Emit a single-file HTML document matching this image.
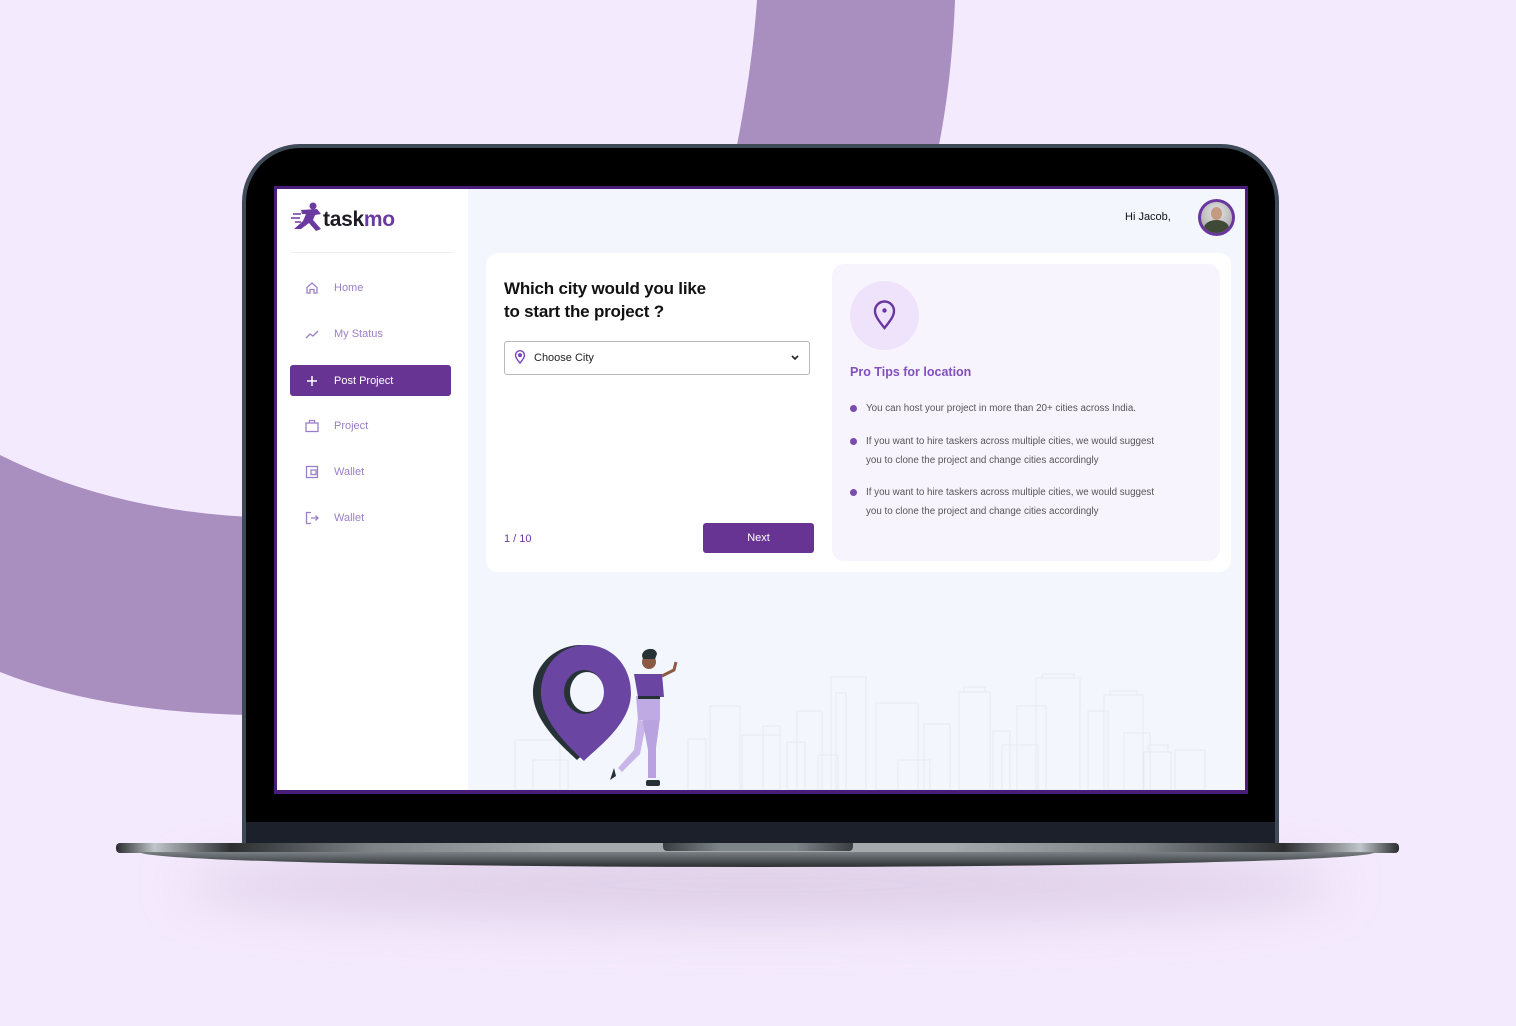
<!DOCTYPE html>
<html><head><meta charset="utf-8"><style>
*{margin:0;padding:0;box-sizing:border-box}
body{width:1516px;height:1026px;overflow:hidden;background:#f4eafd;font-family:"Liberation Sans",sans-serif;position:relative}
.abs{position:absolute}
.nav{position:absolute;left:290px;width:161px;height:31px;display:flex;align-items:center;font-size:11px;color:#9b7fc6;border-radius:3px}
.nav svg{position:absolute;left:15px}
.nav span{position:absolute;left:44px}
.tip{position:absolute;left:850px;font-size:9.8px;color:#555;line-height:19px;letter-spacing:0px}
.tip:before{content:"";position:absolute;left:0;top:6px;width:7px;height:7px;border-radius:50%;background:#7a4ab0}
.tip div{padding-left:16px}
</style></head><body>
<svg class="abs" style="left:0;top:0" width="1516" height="1026">
<defs><filter id="b" x="-20%" y="-200%" width="140%" height="500%"><feGaussianBlur stdDeviation="25"/></filter></defs>
<path d="M757 0 L955 0 Q952 80 938 150 L736 150 Q752 70 757 0Z" fill="#a98ec0"/>
<path d="M0 455 Q110 510 250 517 L250 715 Q100 712 0 672Z" fill="#a98ec0"/>
<ellipse cx="760" cy="885" rx="580" ry="35" fill="#d9c8e2" opacity="0.8" filter="url(#b)"/>
</svg>
<div class="abs" style="left:242px;top:144px;width:1037px;height:710px;background:#3f4a59;border-radius:58px 58px 0 0"></div>
<div class="abs" style="left:246px;top:148px;width:1029px;height:700px;background:#000;border-radius:54px 54px 0 0"></div>
<div class="abs" style="left:246px;top:822px;width:1029px;height:24px;background:#1b202b"></div>
<div class="abs" style="left:116px;top:843px;width:1283px;height:10px;border-radius:4px;background:linear-gradient(90deg,#2a2c2f 0%,#c0c6c9 3%,#2c2e30 9%,#7d8385 20%,#a4aaac 35%,#a4aaac 65%,#7d8385 80%,#2c2e30 91%,#c0c6c9 97%,#2a2c2f 100%)"></div>
<div class="abs" style="left:140px;top:852px;width:1235px;height:15px;background:linear-gradient(#7a8084,#2c3033);border-radius:0 0 50% 50%/0 0 100% 100%"></div>
<div class="abs" style="left:663px;top:843px;width:190px;height:8px;border-radius:0 0 4px 4px;background:linear-gradient(90deg,#3a3d40,#7d8588 30%,#7d8588 70%,#3a3d40)"></div>
<div class="abs" style="left:274px;top:186px;width:974px;height:608px;background:#4b1d7a"></div>
<div class="abs" style="left:277px;top:189px;width:968px;height:601px;background:#f3f6fd;overflow:hidden">
  <div class="abs" style="left:0;top:0;width:191px;height:601px;background:#fff"></div>
  <div class="abs" style="left:14px;top:63px;width:163px;height:1px;background:#f0eef3"></div>
</div>
<svg class="abs" style="left:291px;top:202px" width="36" height="30" viewBox="0 0 36 30">
<circle cx="22" cy="4" r="3.5" fill="#6a3aa0"/>
<path d="M10 8 L26 7 L30 12 L24 13 L22 18 L30 27 L25 29 L18 21 L10 27 L3 27 L12 19 L15 12 L11 12Z" fill="#6a3aa0"/>
<path d="M2 12h8M0 16h9M4 20h6" stroke="#6a3aa0" stroke-width="1.5"/>
</svg>
<div class="abs" style="left:323px;top:208px;font-size:21px;font-weight:bold;letter-spacing:-0.3px;color:#1e1a24">task<span style="color:#6a3aa0">mo</span></div>
<div class="nav" style="top:272px"><svg width="14" height="14" viewBox="0 0 14 14" fill="none" stroke="#9b7fc6" stroke-width="1.3"><path d="M2 6.5L7 2l5 4.5V12H9V8.5H5V12H2z"/></svg><span>Home</span></div>
<div class="nav" style="top:318px"><svg width="14" height="14" viewBox="0 0 14 14" fill="none" stroke="#9b7fc6" stroke-width="1.3"><path d="M1 11l4-4 3 2 5-5"/></svg><span>My Status</span></div>
<div class="nav" style="top:365px;background:#673493;color:#fff"><svg width="14" height="14" viewBox="0 0 14 14" stroke="#fff" stroke-width="1.5"><path d="M7 2v10M2 7h10"/></svg><span>Post Project</span></div>
<div class="nav" style="top:410px"><svg width="14" height="14" viewBox="0 0 14 14" fill="none" stroke="#9b7fc6" stroke-width="1.3"><rect x="1" y="4" width="12" height="8.5"/><path d="M4.5 4V1.5h5V4"/></svg><span>Project</span></div>
<div class="nav" style="top:456px"><svg width="14" height="14" viewBox="0 0 14 14" fill="none" stroke="#9b7fc6" stroke-width="1.3"><rect x="1.5" y="1.5" width="11" height="11"/><rect x="6" y="5" width="5" height="4.5"/></svg><span>Wallet</span></div>
<div class="nav" style="top:502px"><svg width="14" height="14" viewBox="0 0 14 14" fill="none" stroke="#9b7fc6" stroke-width="1.3"><path d="M6 1.5H1.5v11H6M6 7h7M10.5 4.5L13 7l-2.5 2.5"/></svg><span>Wallet</span></div>
<div class="abs" style="left:1125px;top:211px;font-size:11px;color:#111">Hi Jacob,</div>
<div class="abs" style="left:1198px;top:199px;width:37px;height:37px;border-radius:50%;background:#6a36a0;padding:3px">
 <div style="width:31px;height:31px;border-radius:50%;overflow:hidden;background:radial-gradient(circle at 50% 35%,#e8e8e8,#9a9a9a);position:relative">
  <div class="abs" style="left:10px;top:5px;width:11px;height:13px;border-radius:50%;background:#c49a82"></div>
  <div class="abs" style="left:3px;top:18px;width:25px;height:16px;border-radius:50% 50% 0 0;background:#3f4a36"></div>
 </div>
</div>
<div class="abs" style="left:486px;top:253px;width:745px;height:319px;background:#fff;border-radius:12px"></div>
<div class="abs" style="left:504px;top:277px;font-size:17px;font-weight:bold;color:#111;line-height:23px;letter-spacing:-0.2px">Which city would you like<br>to start the project ?</div>
<div class="abs" style="left:504px;top:341px;width:306px;height:34px;border:1px solid #b8b8bd;border-radius:3px"></div>
<svg class="abs" style="left:514px;top:350px" width="12" height="14" viewBox="0 0 12 14" fill="none" stroke="#7a46b8" stroke-width="1.4"><path d="M6 13C3 9.5 1.5 7.3 1.5 5.2a4.5 4.5 0 019 0C10.5 7.3 9 9.5 6 13z"/><circle cx="6" cy="5.2" r="1.4" fill="#7a46b8"/></svg>
<div class="abs" style="left:534px;top:352px;font-size:11px;color:#222">Choose City</div>
<svg class="abs" style="left:790px;top:354px" width="10" height="8" viewBox="0 0 10 8" fill="none" stroke="#222" stroke-width="1.6"><path d="M2 2l3 3 3-3"/></svg>
<div class="abs" style="left:504px;top:533px;font-size:11px;color:#6a36a0">1 / 10</div>
<div class="abs" style="left:703px;top:523px;width:111px;height:30px;background:#673493;border-radius:3px;color:#fff;font-size:11px;text-align:center;line-height:30px">Next</div>
<div class="abs" style="left:832px;top:264px;width:388px;height:297px;background:#f8f4fe;border-radius:12px"></div>
<div class="abs" style="left:850px;top:281px;width:69px;height:69px;border-radius:50%;background:#efe3fb"></div>
<svg class="abs" style="left:873px;top:300px" width="23" height="30" viewBox="0 0 23 30" fill="none" stroke="#6a36a0" stroke-width="2.4"><path d="M11.5 28C5 20 2 15.5 2 11a9.5 9.5 0 0119 0c0 4.5-3 9-9.5 17z"/><circle cx="11.5" cy="10.5" r="2.2" fill="#6a36a0" stroke="none"/></svg>
<div class="abs" style="left:850px;top:365px;font-size:12.5px;font-weight:bold;color:#8150bd">Pro Tips for location</div>
<div class="tip" style="top:399px"><div>You can host your project in more than 20+ cities across India.</div></div>
<div class="tip" style="top:432px"><div>If you want to hire taskers across multiple cities, we would suggest<br>you to clone the project and change cities accordingly</div></div>
<div class="tip" style="top:483px"><div>If you want to hire taskers across multiple cities, we would suggest<br>you to clone the project and change cities accordingly</div></div>
<svg class="abs" style="left:468px;top:640px" width="777" height="150" fill="none" stroke="#e8eaf1" stroke-width="1">
<g transform="translate(-468,-640)">
<rect x="515" y="740" width="45" height="50"/><rect x="533" y="760" width="35" height="30"/>
<rect x="688" y="739" width="18" height="51"/><rect x="710" y="706" width="30" height="84"/><rect x="742" y="735" width="38" height="55"/><rect x="763" y="726" width="17" height="64"/>
<rect x="787" y="742" width="18" height="48"/><rect x="797" y="711" width="25" height="79"/><rect x="818" y="755" width="20" height="35"/>
<rect x="831" y="677" width="35" height="113"/><rect x="836" y="693" width="10" height="97"/><rect x="876" y="703" width="42" height="87"/>
<rect x="898" y="760" width="32" height="30"/><rect x="924" y="724" width="26" height="66"/><rect x="959" y="692" width="31" height="98"/><rect x="964" y="687" width="21" height="5"/>
<rect x="993" y="731" width="17" height="59"/><rect x="1017" y="706" width="29" height="84"/><rect x="1002" y="745" width="36" height="45"/>
<rect x="1036" y="678" width="44" height="112"/><rect x="1042" y="674" width="32" height="4"/><rect x="1088" y="711" width="20" height="79"/>
<rect x="1104" y="695" width="39" height="95"/><rect x="1110" y="691" width="27" height="4"/><rect x="1144" y="752" width="27" height="38"/><rect x="1148" y="745" width="20" height="7"/>
<rect x="1124" y="733" width="26" height="57"/><rect x="1175" y="750" width="30" height="40"/>
</g>
</svg>
<svg class="abs" style="left:530px;top:640px" width="160" height="152" viewBox="0 0 160 152">
<path d="M51 5C25 5 3 26 3 53c0 30 35 58 44 67C58 110 93 85 93 53 93 26 76 5 51 5z" fill="#263236"/>
<path d="M56 5C30 5 11 26 11 53c0 30 33 58 43 68C64 110 101 85 101 53 101 26 82 5 56 5z" fill="#6a46a2"/>
<ellipse cx="54" cy="52" rx="20" ry="22" fill="#263236"/>
<ellipse cx="57" cy="52" rx="17" ry="20" fill="#f3f6fd"/>
<path d="M108 78 L104 110 L88 128 L92 132 L110 114 L116 84Z" fill="#c9b6e8"/>
<path d="M112 78 L118 110 L118 138 L126 138 L126 108 L130 78Z" fill="#b9a2e0"/>
<path d="M104 34 L132 34 L134 57 L108 57Z" fill="#6a46a2"/>
<path d="M106 56 L130 56 L130 80 L108 80Z" fill="#c0aae4"/>
<rect x="108" y="56" width="22" height="3" fill="#263236"/>
<circle cx="119" cy="22" r="7" fill="#8a5a44"/>
<path d="M112 16c0-8 14-10 15-2l-2 5-12 0z" fill="#263236"/>
<path d="M132 36 L144 30 L146 22" stroke="#8a5a44" stroke-width="3" fill="none"/>
<path d="M84 128 L80 140 L86 136Z" fill="#263236"/><rect x="116" y="140" width="14" height="6" rx="2" fill="#263236"/>
</svg>
</body></html>
